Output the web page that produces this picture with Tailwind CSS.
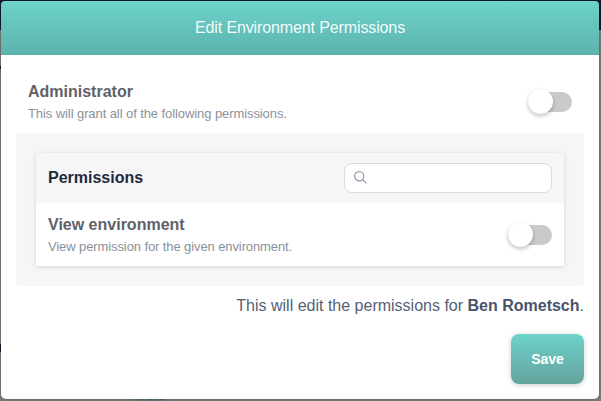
<!DOCTYPE html>
<html lang="en">
<head>
<meta charset="utf-8">
<title>Edit Environment Permissions</title>
<script src="https://cdn.jsdelivr.net/npm/@tailwindcss/browser@4"></script>
</head>
<body class="relative h-[401px] w-[601px] overflow-hidden bg-[#7b7b7b] font-['Liberation_Sans',Arial,sans-serif]">
  <!-- Dimmed page behind the dialog -->
  <div class="absolute inset-0">
    <div class="h-[30px] bg-[#131a2b]"></div>
    <div class="absolute left-0 top-[66px] h-[3px] w-1 bg-[#131a2b]"></div>
    <div class="absolute left-0 top-[344px] h-[8px] w-1 bg-[#131a2b]"></div>
    <div class="absolute left-[129px] top-[395px] text-[14px] leading-[14px] text-[#35716d]">Users</div>
  </div>

  <!-- Dialog -->
  <div class="relative ml-px mt-px flex h-[398px] w-[598px] flex-col rounded-[5px] shadow-[0_0_2px_rgba(0,0,0,0.4)]">
    <header class="flex h-[54px] shrink-0 items-center justify-center rounded-t-[4px] bg-linear-to-b from-[#6dd3cb] to-[#5cb3ac] text-[16px] text-white/95"><span class="tracking-[-0.12px]">Edit Environment Permissions</span></header>
    <main class="flex grow flex-col rounded-b-[5px] bg-white px-[15px]">
      <div class="flex h-[78px] items-start justify-between px-3 pt-[27px]">
        <div>
          <div class="text-[16px] font-bold leading-5 text-[#5f6167]">Administrator</div>
          <div class="mt-1 text-[13px] leading-4 tracking-[-0.085px] text-[#8b919b]">This will grant all of the following permissions.</div>
        </div>
        <div class="mt-[10px] flex h-5 w-11 items-center rounded-full bg-[#cacaca]"><div class="mb-px size-[25px] shrink-0 rounded-full bg-white shadow-[0_2px_4px_rgba(0,0,0,0.25)]"></div></div>
      </div>

      <section class="h-[153px] rounded-[4px] bg-[#f6f6f6] px-5 pt-5">
        <div class="h-[113px] overflow-hidden rounded-t-[4px] bg-white shadow-[0_1px_5px_rgba(0,0,0,0.14)]">
          <div class="flex h-[50px] items-center justify-between bg-[#f6f6f6] px-3">
            <div class="text-[16px] font-bold text-[#1e2a42]">Permissions</div>
            <div class="flex h-[30px] w-[208px] items-center rounded-lg border border-[#d8dae0] bg-white pl-[9px]">
              <svg class="mb-[2px] size-[13px] text-[#9199a6]" viewBox="0 0 13 13" fill="none" stroke="currentColor" stroke-width="1.2"><circle cx="5.2" cy="5.2" r="4.6"/><path d="M8.5 8.5 12.3 12.3"/></svg>
            </div>
          </div>
          <div class="flex items-start justify-between px-3 pt-3">
            <div>
              <div class="text-[16px] font-bold leading-5 text-[#5f6167]">View environment</div>
              <div class="mt-1 text-[13px] leading-4 tracking-[-0.1px] text-[#8b919b]">View permission for the given environment.</div>
            </div>
            <div class="mt-[10px] flex h-5 w-11 items-center rounded-full bg-[#cacaca]"><div class="mb-px size-[25px] shrink-0 rounded-full bg-white shadow-[0_2px_4px_rgba(0,0,0,0.25)]"></div></div>
          </div>
        </div>
      </section>

      <p class="mt-[9px] text-right text-[16px] leading-[22px] text-[#555f74]">This will edit the permissions for <b class="text-[#48536b]">Ben Rometsch</b>.</p>
      <button class="mt-[17px] h-[50px] w-[73px] self-end rounded-lg bg-linear-to-b from-[#6dd3cb] to-[#64a39d] text-[14px] font-bold text-white shadow-[0_1px_5px_rgba(0,0,0,0.2)]">Save</button>
    </main>
  </div>
</body>
</html>
